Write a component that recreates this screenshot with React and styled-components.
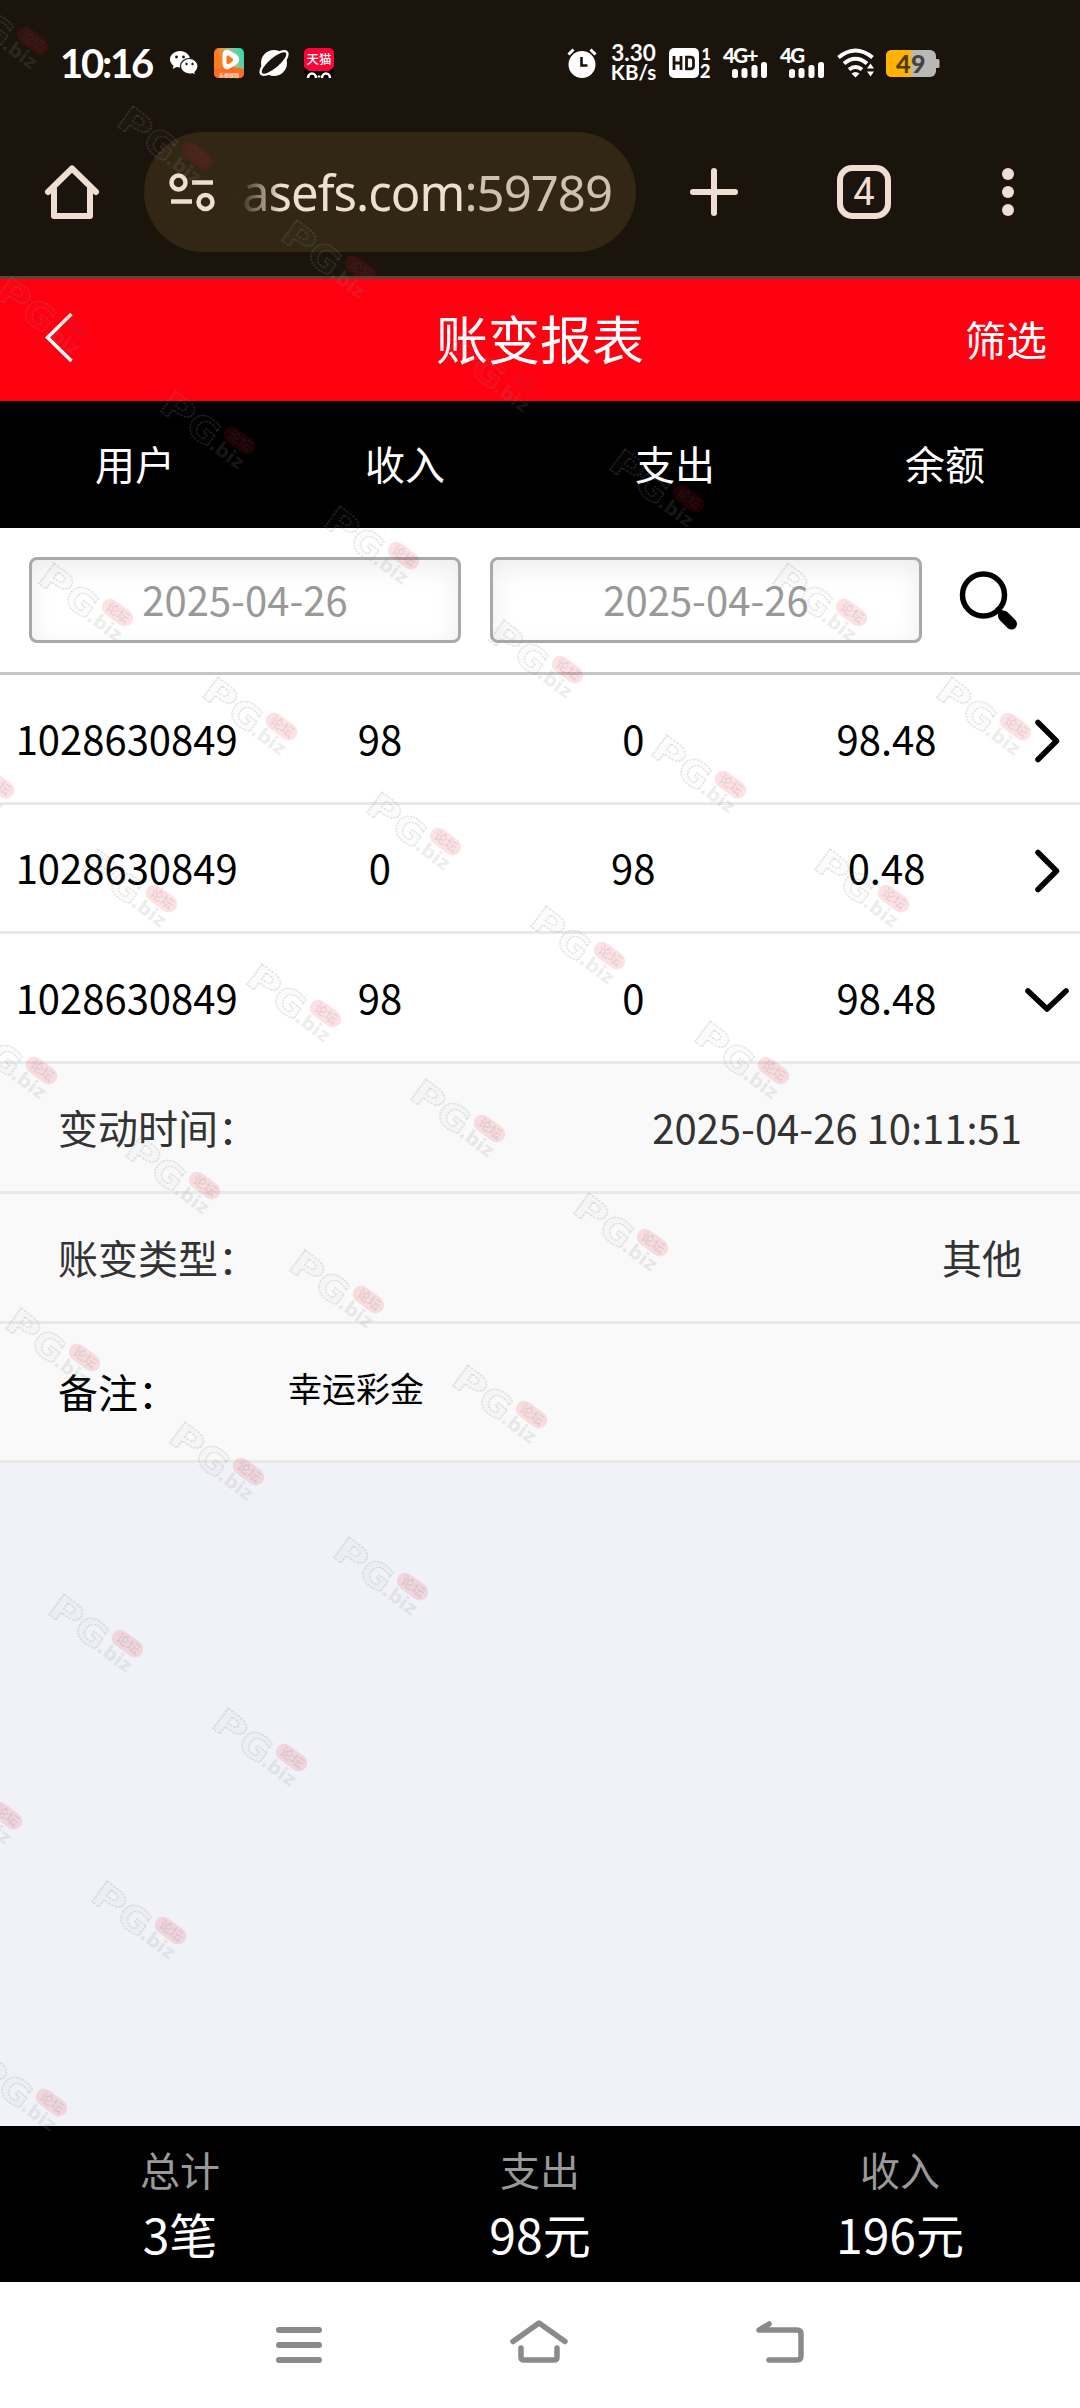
import styled, { createGlobalStyle } from "styled-components";

const GlobalStyle = createGlobalStyle`
  * {
    box-sizing: border-box;
  }
  body {
    margin: 0;
    background: #f0f2f8;
    font-family: "Noto Sans CJK SC", sans-serif;
  }
  svg {
    display: block;
    flex: none;
    overflow: visible;
  }
`;

const Screen = styled.div`
  position: relative;
  width: 1080px;
  height: 2408px;
  display: flex;
  flex-direction: column;
  overflow: hidden;
`;

const StatusBar = styled.div`
  height: 126px;
  flex: none;
  display: flex;
  align-items: center;
  justify-content: space-between;
  padding: 0 141px 0 60px;
  background: #1b140c;
  color: #fff;
  font-family: Lato, sans-serif;
`;

const StatusGroup = styled.div`
  display: flex;
  align-items: center;
  gap: ${p => p.$gap}px;
`;

const Clock = styled.span`
  width: 94px;
  font: 700 40px/40px Lato, sans-serif;
  letter-spacing: -2.2px;
  white-space: nowrap;
`;

const Speed = styled.div`
  width: 47px;
  display: flex;
  flex-direction: column;
  align-items: center;
  font: 700 22.5px/19px Lato, sans-serif;
`;

const SpeedUnit = styled.span`
  font-size: 20.5px;
  line-height: 21px;
`;

const BrowserBar = styled.div`
  height: 153px;
  flex: none;
  display: flex;
  align-items: center;
  padding: 0 66px 18px 45px;
  background: #1b140c;
  border-bottom: 3px solid #5b4636;
`;

const AddressPill = styled.div`
  width: 492px;
  height: 120px;
  margin: 0 54px 0 45px;
  padding: 0 24px 0 25px;
  display: flex;
  align-items: center;
  border-radius: 60px;
  background: #322715;
`;

const Address = styled.div`
  flex: 1;
  margin-left: 24px;
  padding-bottom: 1px;
  display: flex;
  justify-content: flex-end;
  overflow: hidden;
  white-space: nowrap;
  color: #efdfd2;
  font: 400 49px/64px "Noto Sans", sans-serif;
  letter-spacing: -0.95px;
  mask-image: linear-gradient(to right, transparent 0, #000 42px);
`;

const Port = styled.span`
  color: #d1c0b0;
`;

const TabCount = styled.div`
  width: 54px;
  height: 54px;
  margin: 0 111px 0 99px;
  display: flex;
  align-items: center;
  justify-content: center;
  border: 6px solid #efdfd2;
  border-radius: 15px;
  color: #efdfd2;
  font: 400 38px/42px Roboto, sans-serif;
`;

const TitleBar = styled.header`
  height: 122px;
  flex: none;
  display: grid;
  grid-template-columns: 1fr auto 1fr;
  align-items: center;
  padding: 0 33px 5px;
  background: #ff0011;
  color: #fff;
`;

const BackIcon = styled.svg`
  margin-left: 12px;
`;

const Title = styled.h1`
  margin: 0;
  font-size: 52px;
  line-height: 76px;
  font-weight: 400;
`;

const FilterLink = styled.span`
  justify-self: end;
  font-size: 41px;
  line-height: 60px;
`;

const TableHead = styled.div`
  height: 127px;
  flex: none;
  display: grid;
  grid-template-columns: repeat(4, 1fr);
  align-items: center;
  padding-bottom: 3px;
  background: #000;
  color: #fff;
  font-size: 40px;
  text-align: center;
`;

const DateFilter = styled.div`
  height: 147px;
  flex: none;
  display: flex;
  align-items: center;
  gap: 29px;
  padding-left: 29px;
  background: #fff;
  border-bottom: 3px solid #c6c6c6;
`;

const DateInput = styled.div`
  width: 432px;
  height: 86px;
  display: flex;
  align-items: center;
  justify-content: center;
  padding-bottom: 2px;
  border: 3px solid #a9a9a9;
  border-radius: 8px;
  background: #fff;
  box-shadow: inset 0 8px 26px #ededed;
  color: #999;
  font-size: 40px;
`;

const SearchIcon = styled.svg`
  margin-left: 9px;
`;

const Row = styled.div`
  height: ${p => p.$height}px;
  flex: none;
  display: grid;
  grid-template-columns: repeat(4, 253.3px) 1fr;
  align-items: center;
  justify-items: center;
  background: #fff;
  border-bottom: 3px solid #e9e9e9;
  color: #000;
  font-size: 40px;
`;

const Cell = styled.span`
  padding-bottom: 2px;
`;

const ArrowBox = styled.span`
  padding-top: 5px;
`;

const Detail = styled.div`
  height: ${p => p.$height}px;
  flex: none;
  display: flex;
  align-items: center;
  justify-content: space-between;
  padding: 0 58px 2px;
  background: #f9f9f9;
  border-bottom: 3px solid #e9e9e9;
  color: #333;
  font-size: 40px;
`;

const Remark = styled(Detail)`
  justify-content: flex-start;
  color: #000;
`;

const RemarkLabel = styled.span`
  width: 230px;
`;

const RemarkText = styled.span`
  padding-bottom: 7px;
  font-size: 34px;
`;

const Blank = styled.div`
  flex: 1;
`;

const Totals = styled.footer`
  height: 156px;
  flex: none;
  display: grid;
  grid-template-columns: repeat(3, 1fr);
  background: #000;
`;

const Total = styled.div`
  display: flex;
  flex-direction: column;
  align-items: center;
  padding-top: 13px;
`;

const TotalLabel = styled.span`
  color: #999;
  font-size: 40px;
  line-height: 60px;
`;

const TotalValue = styled.span`
  color: #fff;
  font-size: 48px;
  line-height: 68px;
`;

const NavBar = styled.nav`
  height: 126px;
  flex: none;
  display: flex;
  justify-content: center;
  gap: 188px;
  padding-top: 36px;
  background: #fff;
`;

const Watermark = styled.svg`
  position: absolute;
  left: ${p => p.$x}px;
  top: ${p => p.$y}px;
  pointer-events: none;
`;

const records = [
  { user: "1028630849", income: "98", expense: "0", balance: "98.48", height: 130 },
  { user: "1028630849", income: "0", expense: "98", balance: "0.48", height: 129 },
  { user: "1028630849", income: "98", expense: "0", balance: "98.48", height: 130, open: true },
];

const totals = [
  { label: "总计", value: "3笔" },
  { label: "支出", value: "98元" },
  { label: "收入", value: "196元" },
];

const stamps = [
  [-47, -9], [117, 106], [281, 220], [445, 334], [609, 449], [772, 563], [936, 677],
  [-4, 277], [160, 391], [324, 506], [488, 620], [651, 735], [814, 849],
  [38, 563], [202, 677], [366, 792], [530, 906], [694, 1021],
  [-81, 735], [82, 849], [246, 964], [410, 1079], [573, 1193],
  [-38, 1021], [125, 1136], [289, 1250], [452, 1365],
  [5, 1308], [169, 1422], [333, 1537],
  [48, 1594], [212, 1708],
  [-73, 1766], [91, 1881],
  [-28, 2053],
];

const Stamp = ({ x, y }) => (
  <Watermark $x={x} $y={y} width="96" height="80">
    <g transform="translate(0 20) rotate(36.5)">
      <g fill="#8c8c8c" fillOpacity="0.04" stroke="#8c8c8c" strokeOpacity="0.24" strokeWidth="1.5" strokeDasharray="2 1" fontFamily="DejaVu Sans" fontWeight="700" fontSize="35">
        <text transform="translate(-3 0) scale(1.3 1)">P</text>
        <text transform="translate(30 1) scale(1.1 1)">G</text>
      </g>
      <rect x="64" y="-32" width="35" height="17" rx="8.5" fill="#f01428" fillOpacity="0.12" />
      <text x="69" y="-19" fontSize="13" fontWeight="700" fill="#555" fillOpacity="0.12" fontFamily="Noto Sans CJK SC">论坛</text>
      <text x="60" y="1" fontSize="19" fontWeight="700" fill="#8c8c8c" fillOpacity="0.17" fontFamily="DejaVu Sans">.biz</text>
    </g>
  </Watermark>
);

const Signal = ({ label }) => (
  <svg width="45" height="30" viewBox="0 0 45 30" fill="#fff">
    <text x="0" y="15" fontFamily="Lato" fontSize="20.500" fontWeight="900" letterSpacing="-1.600">{label}</text>
    <rect x="9" y="21" width="6" height="9" rx="2.5" />
    <rect x="18.5" y="20" width="6" height="10" rx="2.5" />
    <rect x="28.5" y="17" width="6" height="13" rx="2.5" />
    <rect x="38" y="14" width="6" height="16" rx="2.5" />
  </svg>
);

const WeChatIcon = () => (
  <svg width="28" height="26" viewBox="0 0 28 26">
    <path d="M10 1C4.500 1 0 4.700 0 9.300c0 2.600 1.400 4.900 3.600 6.400L2.700 19l3.700-1.900c1.100.3 2.300.5 3.600.5 5.500 0 10-3.700 10-8.300S15.500 1 10 1z" fill="#fff" />
    <path d="M19.500 8.500c-5 0-9 3.500-9 7.800s4 7.800 9 7.800c1 0 2-.1 2.900-.4l3.300 1.800-.8-3c2-1.500 3.100-3.700 3.100-6.200 0-4.300-3.700-7.800-8.500-7.800z" fill="#fff" stroke="#1b140c" strokeWidth="1.200" />
    <g fill="#1b140c">
      <circle cx="6.500" cy="7" r="1.400" />
      <circle cx="13.500" cy="7" r="1.400" />
      <circle cx="16.500" cy="14" r="1.200" />
      <circle cx="22.500" cy="14" r="1.200" />
    </g>
  </svg>
);

const VideoIcon = () => (
  <svg width="30" height="30" viewBox="0 0 30 30">
    <defs>
      <linearGradient id="video" x1="0" y1="0.500" x2="1" y2="0.150">
        <stop offset="0.200" stopColor="#ff7a1e" />
        <stop offset="0.600" stopColor="#a9bd8c" />
        <stop offset="1" stopColor="#1fe0b8" />
      </linearGradient>
    </defs>
    <rect width="30" height="30" rx="5" fill="url(#video)" />
    <path d="M0 21q15-4 30 0v4q0 5-5 5H5q-5 0-5-5z" fill="#ff6a26" />
    <path d="M9.500 7q0-5 5-4l7 4q5.500 4.500 0 9l-7 4q-4.500 1-5-4z" fill="#fff" stroke="#fff" strokeWidth="2" strokeLinejoin="round" />
    <path d="M12.500 9q0-2 2-1.500l4 3q1.500 1.500 0 3l-4 2.500q-2 .5-2-1.500z" fill="#ff7417" />
    <text x="5" y="28.500" fontSize="5" fontWeight="700" fill="#ffe2c8" fontFamily="Noto Sans CJK SC">乐视视频</text>
  </svg>
);

const PlanetIcon = () => (
  <svg width="28" height="28" viewBox="0 0 28 28">
    <circle cx="14" cy="14" r="13" fill="#fff" />
    <ellipse cx="14" cy="14" rx="18" ry="7.500" transform="rotate(-40 14 14)" fill="#fff" />
    <ellipse cx="14" cy="14" rx="15.500" ry="4.800" transform="rotate(-40 14 14)" fill="#1b140c" />
  </svg>
);

const TmallIcon = () => (
  <svg width="30" height="30" viewBox="0 0 30 30">
    <rect width="30" height="30" rx="5" fill="#ff0334" />
    <path d="M0 19l5 4h20l5-4v6q0 5-5 5H5q-5 0-5-5z" fill="#000" />
    <path d="M4 30a4 4.500 0 0 1 8 0M18 30a4 4.500 0 0 1 8 0" fill="none" stroke="#fff" strokeWidth="2.600" />
    <rect x="13.500" y="27.500" width="3" height="2" rx="1" fill="#fff" />
    <text x="2.500" y="16" fontSize="12.500" fill="#fff" fontWeight="500" fontFamily="Noto Sans CJK SC">天猫</text>
  </svg>
);

const AlarmIcon = () => (
  <svg width="31" height="30" viewBox="0 0 31 30">
    <circle cx="15" cy="16.500" r="13.500" fill="#fff" />
    <path d="M1.500 6.500l5-5M28.500 6.500l-5-5" stroke="#fff" strokeWidth="3" />
    <path d="M14.500 9v8.500h6" fill="none" stroke="#1b140c" strokeWidth="2.600" />
  </svg>
);

const HdIcon = () => (
  <svg width="42" height="30" viewBox="0 0 42 30">
    <rect width="30" height="30" rx="5" fill="#fff" />
    <path d="M5 8v14M12 8v14M5 15h7M17.500 9.200h4q3 0 3 3v5.600q0 3-3 3h-4z" fill="none" stroke="#1b140c" strokeWidth="2.800" />
    <g fill="#fff" fontFamily="Lato" fontWeight="900">
      <text x="32.500" y="12" fontSize="16">1</text>
      <text x="31" y="30" fontSize="18">2</text>
    </g>
  </svg>
);

const WifiIcon = () => (
  <svg width="37" height="30" viewBox="0 0 37 30">
    <g fill="none" stroke="#fff" strokeWidth="4">
      <path d="M1.500 9.500q17-14 34 0" />
      <path d="M7 15.500q11.500-9.500 23 0" />
      <path d="M12 21.500q6.500-5 13 0" />
    </g>
    <path d="M14.500 25.500q4-3 8 0l-4 4z" fill="#fff" />
    <path d="M33.500 15.500l3.500 5h-7zM33.500 28.500l3.500-5h-7z" fill="#fff" />
  </svg>
);

const BatteryIcon = () => (
  <svg width="53" height="27" viewBox="0 0 53 27">
    <rect width="50" height="27" rx="6" fill="#b9b8b4" />
    <path d="M6 0h19v27H6q-6 0-6-6V6q0-6 6-6z" fill="#ffb300" />
    <rect x="49" y="9" width="4.500" height="9" rx="1.500" fill="#b9b8b4" />
    <g fontFamily="Lato" fontSize="25" fontWeight="900">
      <text x="10" y="22.500" fill="#4f3b0e">4</text>
      <text x="25" y="22.500" fill="#44433f">9</text>
    </g>
  </svg>
);

const Arrow = ({ open }) => (
  open ? (
    <svg width="44" height="26" viewBox="0 0 44 26" fill="none" stroke="#000" strokeWidth="5.500" strokeLinecap="round" strokeLinejoin="round">
      <path d="M3 4l19 18L41 4" />
    </svg>
  ) : (
    <svg width="26" height="44" viewBox="0 0 26 44" fill="none" stroke="#000" strokeWidth="5.500" strokeLinecap="round" strokeLinejoin="round">
      <path d="M4 3.500l18.500 18.500L4 40.500" />
    </svg>
  )
);

export default function App() {
  return (
    <Screen>
      <GlobalStyle />
      <StatusBar>
        <StatusGroup $gap={16}>
          <Clock>10:16</Clock>
          <WeChatIcon />
          <VideoIcon />
          <PlanetIcon />
          <TmallIcon />
        </StatusGroup>
        <StatusGroup $gap={12}>
          <AlarmIcon />
          <Speed>
            <span>3.30</span>
            <SpeedUnit>KB/s</SpeedUnit>
          </Speed>
          <HdIcon />
          <Signal label="4G+" />
          <Signal label="4G" />
          <WifiIcon />
          <BatteryIcon />
        </StatusGroup>
      </StatusBar>

      <BrowserBar>
        <svg width="54" height="54" viewBox="0 0 54 54" fill="none" stroke="#efdfd2" strokeWidth="6" strokeLinecap="round" strokeLinejoin="round">
          <path d="M3 27L27 3.500 51 27M9 24v27h36V24" />
        </svg>
        <AddressPill>
          <svg width="46" height="40" viewBox="0 0 46 40" fill="none" stroke="#efdfd2" strokeWidth="4.500">
            <circle cx="9.500" cy="10.500" r="7" />
            <path d="M23 10.500h21M2 29.500h21" />
            <circle cx="36.500" cy="30" r="7" />
          </svg>
          <Address>
            basefs.com<Port>:59789</Port>
          </Address>
        </AddressPill>
        <svg width="48" height="48" viewBox="0 0 48 48" stroke="#efdfd2" strokeWidth="6" strokeLinecap="round">
          <path d="M24 3v42M3 24h42" />
        </svg>
        <TabCount>4</TabCount>
        <svg width="12" height="48" viewBox="0 0 12 48" fill="#efdfd2">
          <circle cx="6" cy="6" r="6" />
          <circle cx="6" cy="24" r="6" />
          <circle cx="6" cy="42" r="6" />
        </svg>
      </BrowserBar>

      <TitleBar>
        <BackIcon width="28" height="50" viewBox="0 0 28 50" fill="none" stroke="#fff" strokeWidth="3.500">
          <path d="M26.500 1L2.500 24.500l24 23.500" />
        </BackIcon>
        <Title>账变报表</Title>
        <FilterLink>筛选</FilterLink>
      </TitleBar>

      <TableHead>
        <span>用户</span>
        <span>收入</span>
        <span>支出</span>
        <span>余额</span>
      </TableHead>

      <DateFilter>
        <DateInput>2025-04-26</DateInput>
        <DateInput>2025-04-26</DateInput>
        <SearchIcon width="58" height="58" viewBox="0 0 58 58" fill="none" stroke="#000" strokeLinecap="round">
          <circle cx="23.500" cy="24" r="21" strokeWidth="5.500" />
          <path d="M38 39l6 6" strokeWidth="6" />
          <path d="M43.500 45l8 8" strokeWidth="11" />
        </SearchIcon>
      </DateFilter>

      {records.map((r, i) => (
        <Row key={i} $height={r.height}>
          <Cell>{r.user}</Cell>
          <Cell>{r.income}</Cell>
          <Cell>{r.expense}</Cell>
          <Cell>{r.balance}</Cell>
          <ArrowBox>
            <Arrow open={r.open} />
          </ArrowBox>
        </Row>
      ))}

      <Detail $height={130}>
        <span>变动时间：</span>
        <span>2025-04-26 10:11:51</span>
      </Detail>
      <Detail $height={130}>
        <span>账变类型：</span>
        <span>其他</span>
      </Detail>
      <Remark $height={139}>
        <RemarkLabel>备注：</RemarkLabel>
        <RemarkText>幸运彩金</RemarkText>
      </Remark>

      <Blank />

      <Totals>
        {totals.map(t => (
          <Total key={t.label}>
            <TotalLabel>{t.label}</TotalLabel>
            <TotalValue>{t.value}</TotalValue>
          </Total>
        ))}
      </Totals>

      <NavBar>
        <svg width="46" height="48" viewBox="0 0 46 48" stroke="#8a8a8a" strokeWidth="6" strokeLinecap="round">
          <path d="M3 12h40M3 27h40M3 42h40" />
        </svg>
        <svg width="58" height="48" viewBox="0 0 58 48" fill="none" stroke="#8a8a8a" strokeWidth="5.500" strokeLinecap="round" strokeLinejoin="round">
          <path d="M3 23.500L29 5l26 18.500" />
          <path d="M11 30v9q0 3 3 3h30q3 0 3-3v-9" />
        </svg>
        <svg width="48" height="48" viewBox="0 0 48 48" fill="none" stroke="#8a8a8a" strokeWidth="5.500" strokeLinecap="round" strokeLinejoin="round">
          <path d="M13 6L3 12h38q4 0 4 4v22q0 4-4 4H13" />
        </svg>
      </NavBar>

      {stamps.map(([x, y]) => (
        <Stamp key={`${x},${y}`} x={x} y={y} />
      ))}
    </Screen>
  );
}
